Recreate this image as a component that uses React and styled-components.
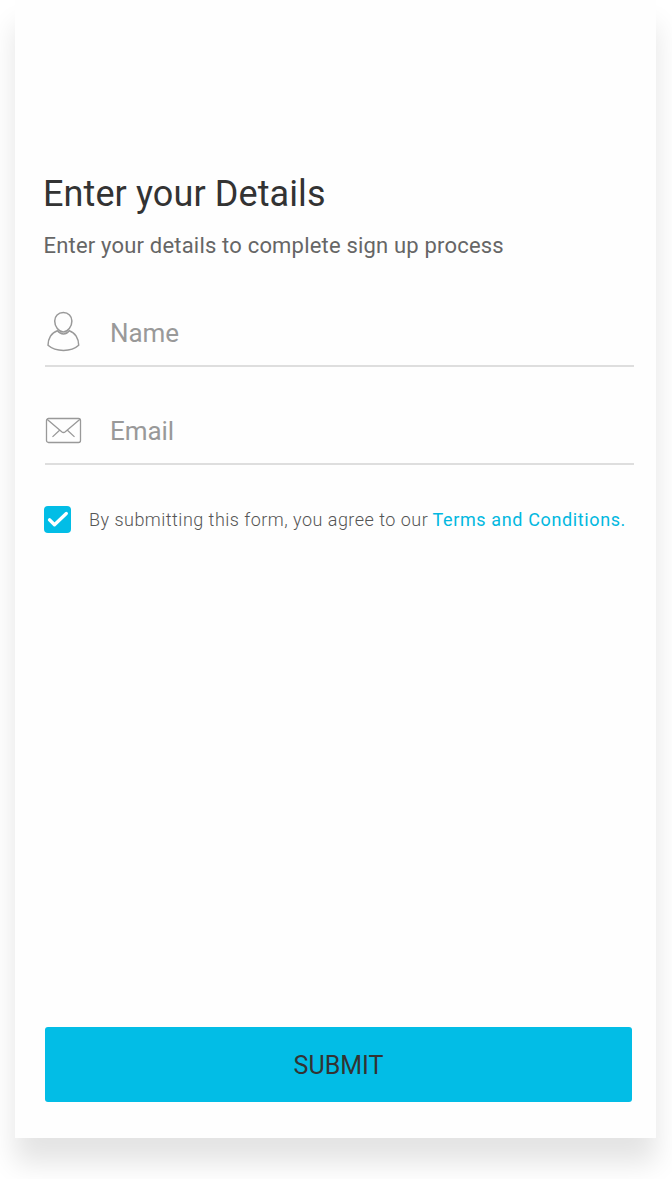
import React from 'react';
import styled, { createGlobalStyle } from 'styled-components';

const Global = createGlobalStyle`
  * { box-sizing: border-box; }
  body { margin: 0; background: #fff; font-family: Roboto, "Liberation Sans", sans-serif; }
`;
const Page = styled.div`
  height: 1179px;
  padding: 0 16px 0 15px;
  overflow: hidden;
`;
const Card = styled.form`
  display: flex;
  flex-direction: column;
  height: 1138px;
  padding: 172px 22px 36px 28px;
  background: #fefefe;
  box-shadow: 0 25px 26px rgba(0, 0, 0, 0.108);
`;
const Title = styled.h1`
  margin: 0;
  font-size: 36px;
  line-height: 44px;
  font-weight: 400;
  letter-spacing: 0.1px;
  color: #333;
  white-space: nowrap;
`;
const Subtitle = styled.p`
  margin: 16px 0 0 0.5px;
  font-size: 22px;
  line-height: 28px;
  font-weight: 400;
  letter-spacing: 0.19px;
  color: #666;
  white-space: nowrap;
`;
const Field = styled.label`
  display: flex;
  align-items: center;
  height: 68px;
  margin: ${(p) => p.$top}px 0 0 2px;
  border-bottom: 2px solid #dedede;
  font-size: 26px;
  letter-spacing: -0.1px;
  color: #999;
  svg { flex: none; }
  span { margin-left: 28px; padding-top: 2px; }
`;
const Agreement = styled.div`
  display: flex;
  align-items: center;
  height: 28px;
  margin: 40px 0 0 1px;
  font-size: 18px;
  font-weight: 300;
  letter-spacing: 0.48px;
  color: #555;
  white-space: nowrap;
`;
const Check = styled.span`
  display: flex;
  width: 27px;
  height: 27px;
  margin-right: 18px;
  border-radius: 4px;
  background: #02bde6;
`;
const Terms = styled.a`
  margin-left: 4.4px;
  font-weight: 400;
  letter-spacing: 0.62px;
  color: #02b8e0;
`;
const Submit = styled.button`
  height: 75px;
  margin: auto 2px 0 2px;
  padding: 2px 0 0;
  border: 0;
  border-radius: 3px;
  background: #02bde6;
  color: #333;
  font: 400 25px Roboto, sans-serif;
`;

const PersonIcon = () => (
  <svg width="37" height="42" viewBox="0 0 37 42" fill="none" stroke="#999" strokeWidth="1.5" strokeLinejoin="round">
    <path d="M18.3 1.6c5.1 0 8.6 3.5 8.6 8.4 0 5.6-4 10.9-8.6 10.9S9.7 15.6 9.7 10c0-4.9 3.5-8.4 8.6-8.4Z" />
    <path d="M12.4 19.800C6.500 21.600 3 27.500 3 34.300c4 3.500 9.200 5.100 15.500 5.100s11.400-1.600 15.200-5.100c0-6.800-3.600-12.700-9.400-14.500-3.400 4.300-8.300 4.300-11.900 0Z" />
  </svg>
);
const MailIcon = () => (
  <svg width="37" height="28" viewBox="0 0 37 28" fill="none" stroke="#999" strokeWidth="1.3">
    <rect x="1.5" y="2.5" width="34" height="24" rx="2" />
    <path d="M2 3.2l14.700 12.600q1.800 1.400 3.600 0L35 3.200M14.300 14.500l-6.800 6.400M22.700 14.500l6.800 6.400" />
  </svg>
);

export default function App() {
  return (
    <Page>
      <Global />
      <Card>
        <Title>Enter your Details</Title>
        <Subtitle>Enter your details to complete sign up process</Subtitle>
        <Field $top={39}><PersonIcon /><span>Name</span></Field>
        <Field $top={30}><MailIcon /><span>Email</span></Field>
        <Agreement>
          <Check>
            <svg width="27" height="27" viewBox="0 0 27 27" fill="none" stroke="#fff" strokeWidth="3.3" strokeLinecap="round" strokeLinejoin="round"><path d="M5.5 13.8l5 4.9L22.3 7.5" /></svg>
          </Check>
          <span>By submitting this form, you agree to our</span>
          <Terms>Terms and Conditions.</Terms>
        </Agreement>
        <Submit type="button">SUBMIT</Submit>
      </Card>
    </Page>
  );
}
